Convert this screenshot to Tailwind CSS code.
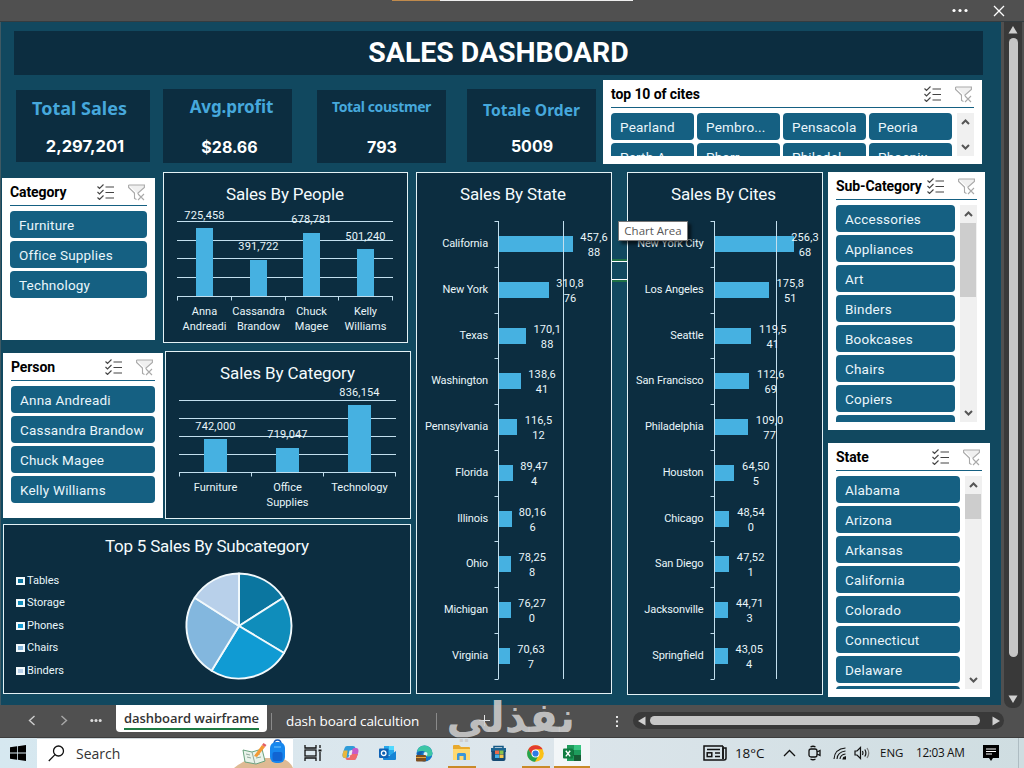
<!DOCTYPE html>
<html lang="en">
<head>
    <meta charset="UTF-8">
    <meta name="viewport" content="width=device-width, initial-scale=1.0">
    <title>Sales Dashboard</title>
    <script src="https://cdn.jsdelivr.net/npm/@tailwindcss/browser@4"></script>
</head>
<body class="w-[1024px] h-[768px] overflow-hidden flex flex-col bg-[#505050] font-[Roboto,sans-serif]">

    <!-- Title bar -->
    <header class="relative h-[22px] shrink-0 bg-[#505050] border-b border-[#343c40] flex items-center justify-end">
        <div class="absolute left-[392px] top-0 flex">
            <div class="w-12 h-px bg-[#c08a4c]"></div>
            <div class="w-[193px] h-px bg-[#eeeeee]"></div>
        </div>
        <svg class="w-4 h-4 mr-[25px]" viewBox="0 0 16 16" fill="#fff"><circle cx="2" cy="7.5" r="1.6"/><circle cx="8" cy="7.5" r="1.6"/><circle cx="14" cy="7.5" r="1.6"/></svg>
        <svg class="w-3 h-3 mr-[19px]" viewBox="0 0 12 12" stroke="#fff" stroke-width="1.3"><path d="M1 1l10 10M11 1L1 11"/></svg>
    </header>

    <div class="flex h-[683px] shrink-0">
        <!-- Worksheet -->
        <main class="w-[1001px] h-full bg-[#11485f] border-l border-[#3f5963] overflow-hidden">
            <div class="ml-[13px] mt-[9px] w-[969px] h-[44px] bg-[#0c2d40] flex items-center justify-center">
                <h1 class="text-white font-bold text-[28.4px] leading-[44px]">SALES DASHBOARD</h1>
            </div>

            <div class="flex items-start h-[97px] text-center font-bold">
                <div class="ml-[15px] mt-[15px] w-[134px] h-[72px] bg-[#0c2d40]">
                    <div class="font-['Noto_Sans'] text-[18px] leading-[20px] pt-[8px] pr-[7px] text-[#46a8dc]"><span>Total Sales</span></div>
                    <div class="font-[Inter] text-[16.5px] leading-[20px] mt-[18px] pl-[4px] text-white"><span>2,297,201</span></div>
                </div>
                <div class="ml-[13px] mt-[14px] w-[129px] h-[74px] bg-[#0c2d40]">
                    <div class="font-['Noto_Sans'] text-[17px] tracking-[-0.1px] leading-[20px] pt-[8px] pl-[8px] text-[#46a8dc]"><span>Avg.profit</span></div>
                    <div class="font-[Inter] text-[16px] leading-[20px] mt-[20px] pl-[4px] text-white"><span>$28.66</span></div>
                </div>
                <div class="ml-[25px] mt-[15px] w-[129px] h-[73px] bg-[#0c2d40]">
                    <div class="font-['Noto_Sans'] text-[14px] tracking-[-0.4px] leading-[20px] pt-[7px] text-[#46a8dc]"><span>Total coustmer</span></div>
                    <div class="font-[Inter] text-[16px] leading-[20px] mt-[20px] pl-[1px] text-white"><span>793</span></div>
                </div>
                <div class="ml-[21px] mt-[14px] w-[129px] h-[73px] bg-[#0c2d40]">
                    <div class="font-['Noto_Sans'] text-[15.6px] leading-[20px] pt-[11px] text-[#46a8dc]"><span>Totale Order</span></div>
                    <div class="font-[Inter] text-[16px] leading-[20px] mt-[16px] pl-[1px] text-white"><span>5009</span></div>
                </div>
                <div class="slicer ml-[7px] mt-[5px] w-[379px] h-[84px] text-left font-normal" data-name="cites"></div>
            </div>

            <div class="flex items-start">
                <div class="w-[415px] shrink-0">
                    <div class="flex items-start">
                        <div class="slicer ml-px mt-[6px] w-[153px] h-[162px]" data-name="category"></div>
                        <svg id="people" class="ml-[8px] w-[245px] h-[171px]" viewBox="163 172 245 171"></svg>
                    </div>
                    <div class="flex items-start mt-[8px]">
                        <div class="slicer ml-[2px] mt-[2px] w-[160px] h-[165px]" data-name="person"></div>
                        <svg id="categories" class="ml-[2px] -mt-px w-[246px] h-[169px]" viewBox="165 350 246 169"></svg>
                    </div>
                    <svg id="pie" class="ml-[2px] mt-[5px] w-[408px] h-[170px]" viewBox="3 524 408 170"></svg>
                </div>

                <svg id="states" class="w-[196px] h-[522px] shrink-0" viewBox="416 172 196 522"></svg>
                <!-- selected cell showing between the two charts -->
                <div class="w-[15px] mt-[87px] shrink-0 border-y-2 border-[#1f7145]">
                    <div class="h-[19px] border-y border-white"></div>
                </div>
                <div class="relative shrink-0">
                    <svg id="cities" class="w-[196px] h-[523px]" viewBox="627 172 196 523"></svg>
                    <div class="absolute -left-[9px] top-[49px] w-[70px] h-[20px] bg-white border border-[#767676] shadow-[3px_3px_3px_rgba(0,0,0,0.6)] text-[#575757] text-[11.5px] leading-[18px] text-center font-['Open_Sans'] whitespace-nowrap"><span>Chart Area</span></div>
                </div>

                <div class="ml-[5px] flex flex-col gap-[13px]">
                    <div class="slicer w-[157px] h-[258px]" data-name="sub"></div>
                    <div class="slicer w-[162px] h-[254px]" data-name="state"></div>
                </div>
            </div>
        </main>

        <!-- Vertical scrollbar -->
        <div class="w-[23px] h-full bg-[#505050] pl-[3px]">
            <div class="w-[18px] h-[686px] bg-[#393939] rounded-b-lg flex flex-col items-center pt-[4px]">
                <svg class="w-[10px] h-[8px]" viewBox="0 0 10 8" fill="#d0d0d0"><path d="M5 0l4.5 7.5h-9z"/></svg>
                <div class="mt-[4px] w-[9px] h-[619px] rounded-full bg-[#c6c6c6]"></div>
                <svg class="mt-[38px] w-[10px] h-[8px]" viewBox="0 0 10 8" fill="#d0d0d0"><path d="M5 8L.5 .5h9z"/></svg>
            </div>
        </div>
    </div>

    <!-- Sheet tabs -->
    <nav class="relative h-[33px] shrink-0 flex items-start font-['Open_Sans'] text-white border-b border-[#3d3d3d]">
        <svg class="ml-[28px] mt-[10px] w-[8px] h-[11px]" viewBox="0 0 8 11" fill="none" stroke="#cfcfcf" stroke-width="1.4"><path d="M6.5 1L1.5 5.5l5 4.5"/></svg>
        <svg class="ml-[24px] mt-[10px] w-[8px] h-[11px]" viewBox="0 0 8 11" fill="none" stroke="#a8a8a8" stroke-width="1.4"><path d="M1.5 1l5 4.5-5 4.5"/></svg>
        <svg class="ml-[22px] mt-[13px] w-[12px] h-[5px]" viewBox="0 0 12 5" fill="#dedede"><circle cx="1.8" cy="2.5" r="1.5"/><circle cx="6" cy="2.5" r="1.5"/><circle cx="10.2" cy="2.5" r="1.5"/></svg>
        <div class="ml-[14px] w-[151px] h-[27px] bg-white rounded-b px-[8px] text-[#333] font-semibold text-[13px] leading-[23px] whitespace-nowrap">
            <div class="w-[135px] h-[25px] pt-[2px] border-b-2 border-[#1d7a43] tracking-[-0.05px] leading-[22px]"><span>dashboard wairframe</span></div>
        </div>
        <div class="ml-[4px] mt-[8px] w-px h-[17px] bg-[#8a8a8a]"></div>
        <div class="ml-[14px] w-[134px] text-[13.5px] leading-[32px] tracking-[-0.1px] whitespace-nowrap"><span>dash board calcultion</span></div>
        <div class="ml-[16px] mt-[8px] w-px h-[17px] bg-[#8a8a8a]"></div>
        <svg class="ml-[42px] mt-[10px] w-[11px] h-[11px]" viewBox="0 0 11 11" stroke="#e5e5e5"><path d="M5.5 0v11M0 5.5h11"/></svg>
        <svg class="ml-[125px] mt-[11px] w-[4px] h-[12px]" viewBox="0 0 4 12" fill="#e8e8e8"><rect x="1" width="2" height="2"/><rect x="1" y="4.5" width="2" height="2"/><rect x="1" y="9" width="2" height="2"/></svg>
        <div class="ml-[14px] mt-[7px] w-[371px] h-[17px] rounded-full bg-[#393939] flex items-center pl-[5px]">
            <svg class="w-[8px] h-[10px]" viewBox="0 0 8 10" fill="#d0d0d0"><path d="M0 5L7.5.5v9z"/></svg>
            <div class="ml-[4px] w-[330px] h-[9px] rounded-full bg-[#c6c6c6]"></div>
            <svg class="ml-[12px] w-[8px] h-[10px]" viewBox="0 0 8 10" fill="#d0d0d0"><path d="M8 5L.5.5v9z"/></svg>
        </div>
        <div class="absolute left-[448px] -top-[13px] w-[127px] text-center text-[#cdcdcd]/90 font-bold text-[42px] leading-[52px] font-['DejaVu_Sans'] whitespace-nowrap" dir="rtl" lang="ar"><span>نفذلي</span></div>
    </nav>

    <!-- Taskbar -->
    <footer class="h-[30px] shrink-0 bg-linear-to-r from-[#d6e8f0] via-[#dde6ec] to-[#cfdde1] flex items-center font-['Open_Sans'] text-[#111]">
        <svg class="ml-[10px] w-[16px] h-[16px]" viewBox="0 0 16 16"><path d="M0 2.3L7 1.3V7.6H0zM7.8 1.2L16 0v7.6H7.8zM0 8.4h7v6.3l-7-1zM7.8 8.4H16V16l-8.2-1.2z"/></svg>
        <div class="ml-[11px] w-[256px] h-full bg-white border-t border-[#d0d8dc] flex items-center overflow-hidden">
            <svg class="ml-[11px] w-[17px] h-[17px]" viewBox="0 0 17 17" fill="none" stroke="#111" stroke-width="1.3"><circle cx="10.5" cy="6" r="5"/><path d="M7 9.6L.8 16"/></svg>
            <div class="ml-[11px] w-[158px] text-[14px] leading-[28px] text-[#333]"><span>Search</span></div>
            <svg class="w-[59px] h-[29px]" viewBox="235 739 59 29">
                <path d="M235 768q12-10 27-10h18q10 1 14 10z" fill="#dfba94"/>
                <path d="M244 750l9 2 10-3 3 12-9 3-11-2z" fill="#e9f3ea" stroke="#69a27e"/>
                <path d="M253 752l3 12M247 754l4 1M248 757l4 1M256 755l5-1M257 758l5-1" stroke="#91a99c" fill="none"/>
                <path d="M255 756l8-11 3 2-8 10z" fill="#f39a35"/><path d="M263 745l1.5-2 3 2-1.5 2z" fill="#e35f65"/>
                <path d="M275 744q0-4 3.5-4t3.5 4" fill="none" stroke="#1859b9" stroke-width="1.5"/>
                <rect x="271" y="742" width="15" height="21" rx="6" fill="#1787ee"/><rect x="273.5" y="752" width="10" height="9" rx="2" fill="#1164d2"/><path d="M275 747h7" stroke="#74c6ff"/>
            </svg>
        </div>
        <div class="w-[39px] flex justify-center"><svg class="w-[18px] h-[16px]" viewBox="0 0 18 16" fill="none" stroke="#111" stroke-width="1.3"><path d="M1 0v3h11V0M1 16v-3h11v3"/><rect x="1" y="5" width="11" height="6"/><path d="M16 0v3M16 7v9"/><path d="M14.5 4.5h3v2h-3z" fill="#111" stroke="none"/></svg></div>
        <div class="w-[37px] flex justify-center"><svg class="w-[17px] h-[16px]" viewBox="0 0 17 16">
            <path d="M5 1h6q2 0 2.500 2l.6 2H9L7 11q-.6 2-2.500 2H3Q0 13 .6 9l2-6Q3.200 1 5 1z" fill="#2f9bd8"/>
            <path d="M.6 9l1-3.500h4L4.500 13H3Q0 13 .6 9z" fill="#e9b73c"/>
            <path d="M12 15H6q-2 0-2.500-2l4.500-.5L10 5q.6-2 2.500-2H14q3 0 2.400 4l-2 6q-.6 2-2.400 2z" fill="#c75bc8"/>
            <path d="M12 15H6q-2 0-2.500-2h4L9 9h7l-1.600 4q-.6 2-2.400 2z" fill="#ef6a6b"/><path d="M7.500 5.500h3L9.500 10h-3z" fill="#e6eef3"/>
        </svg></div>
        <div class="w-[37px] flex justify-center"><svg class="w-[17px] h-[16px]" viewBox="0 0 17 16"><path d="M5 1h10v9H5z" fill="#28a8ea"/><path d="M10 1h5v4h-5z" fill="#50d9ff"/><path d="M4 7l6 4 7-5v8q0 1-1 1H5q-1 0-1-1z" fill="#1683d4"/><rect y="3.5" width="9.5" height="9.5" rx="1" fill="#0f62b5"/><circle cx="4.7" cy="8.2" r="2.3" fill="none" stroke="#fff" stroke-width="1.3"/></svg></div>
        <div class="w-[37px] flex justify-center"><svg class="w-[17px] h-[17px]" viewBox="0 0 17 17"><circle cx="8.5" cy="8.5" r="8" fill="#1577c9"/><path d="M1 7Q2 .5 8.500.5T16.500 8q0 3.500-4 3.500-3 0-2.500-2 .5-3-3-3.500-4-.5-6 1z" fill="#3dc6a5"/><path d="M8 6q-3.500 1-2.500 5 1.500 4 6 4.500Q3 18 1 11 .5 6 8 6z" fill="#155fa8"/><circle cx="9.5" cy="9" r="2" fill="#dff1f5"/><rect y="10" width="10" height="6.5" rx="1" fill="#7b4e22"/><path d="M0 12h10v1H0z" fill="#e7a53a"/></svg></div>
        <div class="w-[37px] h-full flex flex-col items-center justify-between"><svg class="mt-[7px] w-[17px] h-[15px]" viewBox="0 0 17 15"><path d="M0 1q0-1 1-1h5l2 2h8q1 0 1 1v11H0z" fill="#e8a92d"/><path d="M0 4h17v11H0z" fill="#ffd970"/><path d="M4 15V9.500Q4 8 5.500 8h6Q13 8 13 9.500V15h-2.500v-4h-4v4z" fill="#3b96d9"/></svg><div class="w-[28px] h-[2px] bg-[#c98a28]"></div></div>
        <div class="w-[37px] flex justify-center"><svg class="w-[17px] h-[17px]" viewBox="0 0 17 17"><path d="M4 3V1.500h9V3" fill="none" stroke="#155985" stroke-width="1.5"/><path d="M1 3h15v4H1z" fill="#1b6491"/><path d="M1.500 6h14v8q0 2-2 2h-10q-2 0-2-2z" fill="#164a73"/><path d="M5 5.500h4V9H5z" fill="#ea6b4a"/><path d="M9.500 5.500h4V9h-4z" fill="#89c34b"/><path d="M5 9.500h4V13H5z" fill="#42b1e8"/><path d="M9.500 9.500h4V13h-4z" fill="#f5c84c"/></svg></div>
        <div class="w-[37px] h-full flex flex-col items-center justify-between"><svg class="mt-[7px] w-[17px] h-[17px]" viewBox="0 0 17 17"><circle cx="8.5" cy="8.5" r="8.3" fill="#fbc116"/><path d="M1.300 4.300A8.300 8.300 0 0 1 15.700 4.300H8.500L5 10.500z" fill="#e33b2e"/><path d="M1.300 4.300A8.300 8.300 0 0 0 8 16.800l3.600-6.300H5z" fill="#22a451"/><circle cx="8.5" cy="8.5" r="4" fill="#fff"/><circle cx="8.5" cy="8.5" r="3.1" fill="#2e7be5"/></svg><div class="w-[28px] h-[2px] bg-[#c98a28]"></div></div>
        <div class="w-[36px] h-full bg-[#f2f6f8] flex flex-col items-center justify-between"><svg class="mt-[7px] w-[18px] h-[16px]" viewBox="0 0 18 16"><path d="M4 0h14v16H4z" fill="#1e9c5c"/><path d="M11 0h7v5h-7z" fill="#38c481"/><path d="M4 5h7v6H4z" fill="#13713f"/><path d="M11 10h7v6h-7z" fill="#165c35"/><rect y="3.5" width="10" height="10" rx="1" fill="#107c41"/><path d="M2.800 5.800l4.400 5.600M7.200 5.800l-4.400 5.600" stroke="#fff" stroke-width="1.4"/></svg><div class="w-full h-[2px] bg-[#c98a28]"></div></div>

        <svg class="ml-[113px] w-[24px] h-[16px]" viewBox="0 0 24 16" fill="none" stroke="#111" stroke-width="1.5"><path d="M20 1H1v14h20q2 0 2-2V3h-3v11"/><path d="M20 1v13M4 4.500h13M12 8h5M12 11.500h5"/><rect x="4.2" y="7.800" width="4.6" height="3.8"/></svg>
        <div class="ml-[8px] w-[29px] text-[13.5px] whitespace-nowrap tracking-[-0.1px]"><span>18°C</span></div>
        <svg class="ml-[19px] w-[13px] h-[8px]" viewBox="0 0 13 8" fill="none" stroke="#111" stroke-width="1.3"><path d="M1 7l5.500-5.500L12 7"/></svg>
        <svg class="ml-[12px] w-[13px] h-[16px]" viewBox="0 0 13 16" fill="none" stroke="#111" stroke-width="1.3"><path d="M2.500 2Q5 .5 7.500 2M2.500 14Q5 15.500 7.500 14"/><rect x="1" y="4" width="8" height="8" rx="2"/><path d="M9 7l3-1.500v5L9 9"/></svg>
        <svg class="ml-[12px] w-[13px] h-[13px]" viewBox="0 0 13 13" fill="none" stroke="#111" stroke-width="1.1"><path d="M1 12Q1.500 2 12.500 1M4 12q.5-7 8.500-8M7 12q.5-4.500 5.500-5"/><path d="M10 12q.2-2 2.500-2.200V12z" fill="#111"/></svg>
        <svg class="ml-[8px] w-[17px] h-[14px]" viewBox="0 0 17 14" fill="none" stroke="#111" stroke-width="1.2"><path d="M1 5h2l3.500-3.500v11L3 9H1zM8.500 5q1 2 0 4M10.800 3.500q2.200 3.500 0 7"/><path d="M13 2q3.500 5 0 10" stroke="#777"/></svg>
        <div class="ml-[9px] w-[24px] text-[11.5px] whitespace-nowrap"><span>ENG</span></div>
        <div class="ml-[12px] w-[50px] text-[11.8px] whitespace-nowrap tracking-[-0.35px]"><span>12:03 AM</span></div>
        <svg class="ml-[17px] w-[16px] h-[16px]" viewBox="0 0 16 16"><path d="M0 0h16v13h-6l-2 3-2-3H0z"/><path d="M3 4h10M3 6.500h10M3 9h6" stroke="#fff"/></svg>
        <div class="ml-[19px] w-px h-full bg-[#aebcc2]"></div>
    </footer>

    <script>
        const slicers = {
            cites: { title: "top 10 of cites", cols: 4, scroll: true, thumb: null,
                items: ["Pearland", "Pembro...", "Pensacola", "Peoria", "Perth A...", "Pharr", "Philadel...", "Phoenix"] },
            category: { title: "Category", items: ["Furniture", "Office Supplies", "Technology"] },
            person: { title: "Person", items: ["Anna Andreadi", "Cassandra Brandow", "Chuck Magee", "Kelly Williams"] },
            sub: { title: "Sub-Category", scroll: true, thumb: 74,
                items: ["Accessories", "Appliances", "Art", "Binders", "Bookcases", "Chairs", "Copiers", ""] },
            state: { title: "State", scroll: true, thumb: 25,
                items: ["Alabama", "Arizona", "Arkansas", "California", "Colorado", "Connecticut", "Delaware", ""] },
        };

        const listIcon = `<svg class="w-[17px] h-[16px]" viewBox="0 0 17 16" fill="none" stroke="#444" stroke-width="1.1"><path d="M.5 2.500l2 2L6.500.5M.5 8l2 2 4-4M.5 13.500l2 2 4-4M8.500 3H17M8.500 8.500H17M8.500 14H17"/></svg>`;
        const filterIcon = `<svg class="ml-[14px] w-[17px] h-[17px]" viewBox="0 0 17 17" fill="none" stroke="#a9a9a9" stroke-width="1.1"><path d="M.6 1h15.800v2.500L10 9v1M.6 1v2.500L6.500 9v5.500l2 1" fill="#f0f0f0"/><path d="M10 10l6 6M16 10l-6 6"/></svg>`;
        const arrow = d => `<svg class="w-[17px] h-[18px] shrink-0" viewBox="0 0 17 18" fill="none" stroke="#555" stroke-width="2"><path d="${d}"/></svg>`;

        document.querySelectorAll(".slicer").forEach(el => {
            const s = slicers[el.dataset.name];
            const buttons = s.items.map(i => `<div class="h-[27px] rounded-[4px] bg-[#156082] pl-[9px] text-[13.5px] leading-[28px] tracking-[0.2px] text-[#eaf6fb] whitespace-nowrap overflow-hidden">${i}</div>`).join("");
            el.classList.add("bg-white", "shrink-0", "px-[8px]", "pb-[8px]", "flex", "flex-col");
            el.innerHTML = `
                <div class="h-[28px] shrink-0 border-b border-[#156082] flex items-center pr-[2px] pt-[1px]">
                    <div class="flex-1 w-0 text-[14px] font-bold text-black whitespace-nowrap leading-[20px] tracking-[-0.1px]"><span>${s.title}</span></div>
                    ${listIcon}${filterIcon}
                </div>
                <div class="mt-[5px] flex-1 min-h-0 flex gap-[5px] overflow-hidden">
                    <div class="flex-1 grid ${s.cols ? "grid-cols-4" : "grid-cols-1"} gap-[3px] content-start">${buttons}</div>
                    ${s.scroll ? `<div class="w-[17px] bg-[#f0f0f0] flex flex-col justify-between">
                        <div>${arrow("M5 11l3.500-3.500L12 11")}${s.thumb ? `<div class="bg-[#cdcdcd] w-[16px]" style="height:${s.thumb}px"></div>` : ""}</div>
                        ${arrow("M5 7l3.500 3.500L12 7")}</div>` : ""}
                </div>`;
        });

        // SVG helpers, all charts use sheet coordinates through their viewBox
        const text = (x, y, str, anchor = "middle", spacing = 0.15) => `<text x="${x}" y="${y}" text-anchor="${anchor}" font-size="11" letter-spacing="${spacing}" fill="#e9f6fa">${str}</text>`;
        const heading = (x, y, str, w) => `<text x="${x}" y="${y}" text-anchor="middle" font-size="17" textLength="${w}" fill="#f4fbfd">${str}</text>`;
        const line = (x1, y1, x2, y2) => `<path d="M${x1} ${y1}L${x2} ${y2}" stroke="#c3dfee" stroke-width="1"/>`;
        const frame = (x, y, w, h) => `<rect x="${x + 0.5}" y="${y + 0.5}" width="${w - 1}" height="${h - 1}" fill="#0c2d40" stroke="#e4f2f6"/>`;
        const bar = (x, y, w, h) => `<rect x="${x}" y="${y}" width="${w}" height="${h}" fill="#46b1e1"/>`;

        function columns(id, box, title, grid, axis, xs, ticks, bw, data) {
            let out = frame(...box) + heading(...title);
            grid.forEach(y => out += line(xs[0], y, xs[1], y));
            out += line(xs[0], axis, xs[1], axis);
            ticks.forEach(x => out += line(x, axis, x, axis + 4));
            data.forEach(d => {
                out += bar(d.x - bw / 2, d.top, bw, axis - 0.5 - d.top) + text(d.x, d.ly, d.value);
                d.name.forEach((n, i) => out += text(d.x, axis + 18.5 + i * 15, n, "middle", 0));
            });
            document.getElementById(id).innerHTML = out;
        }

        columns("people", [163, 172, 245, 171], [285, 200, "Sales By People", 118], [221.5, 240.5, 258.5, 277.5], 296.5,
            [177, 393], [177.5, 231.5, 285.5, 338.5, 392.5], 17, [
                { x: 204.5, top: 228, ly: 219, value: "725,458", name: ["Anna", "Andreadi"] },
                { x: 258.5, top: 260, ly: 250, value: "391,722", name: ["Cassandra", "Brandow"] },
                { x: 311.5, top: 233, ly: 223, value: "678,781", name: ["Chuck", "Magee"] },
                { x: 365.5, top: 249, ly: 240, value: "501,240", name: ["Kelly", "Williams"] },
            ]);
        columns("categories", [165, 351, 246, 168], [287.5, 379, "Sales By Category", 135], [400.5, 418.5, 436.5, 454.5], 472.5,
            [179, 396], [179.5, 251.5, 323.5, 395.5], 23, [
                { x: 215.5, top: 439, ly: 430, value: "742,000", name: ["Furniture"] },
                { x: 287.5, top: 448, ly: 438, value: "719,047", name: ["Office", "Supplies"] },
                { x: 359.5, top: 405, ly: 396, value: "836,154", name: ["Technology"] },
            ]);

        function rows(id, box, title, axis, grid, right, scale, offset, data) {
            const step = 45.75;
            let out = frame(...box) + heading(...title);
            data.forEach(([name, value], i) => {
                out += bar(axis + 0.5, Math.round(236 + i * step), Math.floor(value * scale), 16);
            });
            out += line(axis, 221, axis, 679) + line(grid, 221, grid, 679);
            for (let i = 0; i <= data.length; i++) {
                const y = Math.round(221 + i * step) + 0.5;
                out += line(axis - 4, y, axis, y);
            }
            data.forEach(([name, value], i) => {
                const y = Math.round(236 + i * step);
                const label = value.toLocaleString("en-US");
                const x = Math.min(axis + value * scale + offset, box[0] + 178);
                // the label box is five characters wide
                out += text(right, y + 11, name, "end", -0.12) + text(x, y + 5, label.slice(0, 5)) + text(x, y + 20, label.slice(5));
            });
            document.getElementById(id).innerHTML = out;
        }

        rows("states", [416, 172, 196, 522], [513, 200, "Sales By State", 106], 498.5, 563.5, 488, 0.0001628, 21, [
            ["California", 457688], ["New York", 310876], ["Texas", 170188], ["Washington", 138641], ["Pennsylvania", 116512],
            ["Florida", 89474], ["Illinois", 80166], ["Ohio", 78258], ["Michigan", 76270], ["Virginia", 70637],
        ]);
        rows("cities", [627, 172, 196, 523], [723.5, 200, "Sales By Cites", 105], 714.5, 776.5, 703.5, 0.0003085, 21.5, [
            ["New York City", 256368], ["Los Angeles", 175851], ["Seattle", 119541], ["San Francisco", 112669], ["Philadelphia", 109077],
            ["Houston", 64505], ["Chicago", 48540], ["San Diego", 47521], ["Jacksonville", 44713], ["Springfield", 43054],
        ]);

        // Pie of the top five subcategories, angles in degrees from 12 o'clock
        const slices = [
            { name: "Tables", color: "#0b76a0", from: 0, to: 57.5 },
            { name: "Storage", color: "#0f8dbb", from: 57.5, to: 121 },
            { name: "Phones", color: "#109bd3", from: 121, to: 211.5 },
            { name: "Chairs", color: "#83b7de", from: 211.5, to: 302.5 },
            { name: "Binders", color: "#b8d0ea", from: 302.5, to: 360 },
        ];
        const point = a => `${239 + 52.5 * Math.sin(a * Math.PI / 180)} ${626 - 52.5 * Math.cos(a * Math.PI / 180)}`;
        let pie = frame(3, 524, 408, 170) + heading(207, 552, "Top 5 Sales By Subcategory", 204);
        slices.forEach((s, i) => {
            const y = 577 + i * 22.5;
            pie += `<path d="M239 626L${point(s.from)}A52.5 52.5 0 0 1 ${point(s.to)}Z" fill="${s.color}" stroke="#f2f9fc" stroke-width="1.9" stroke-linejoin="round"/>`;
            pie += `<rect x="17" y="${Math.floor(y) + 1}" width="7" height="6" fill="${s.color}" stroke="#f2f9fc" stroke-width="2"/>` + text(27, Math.floor(y) + 7, s.name, "start", 0);
        });
        document.getElementById("pie").innerHTML = pie;
    </script>
</body>
</html>
